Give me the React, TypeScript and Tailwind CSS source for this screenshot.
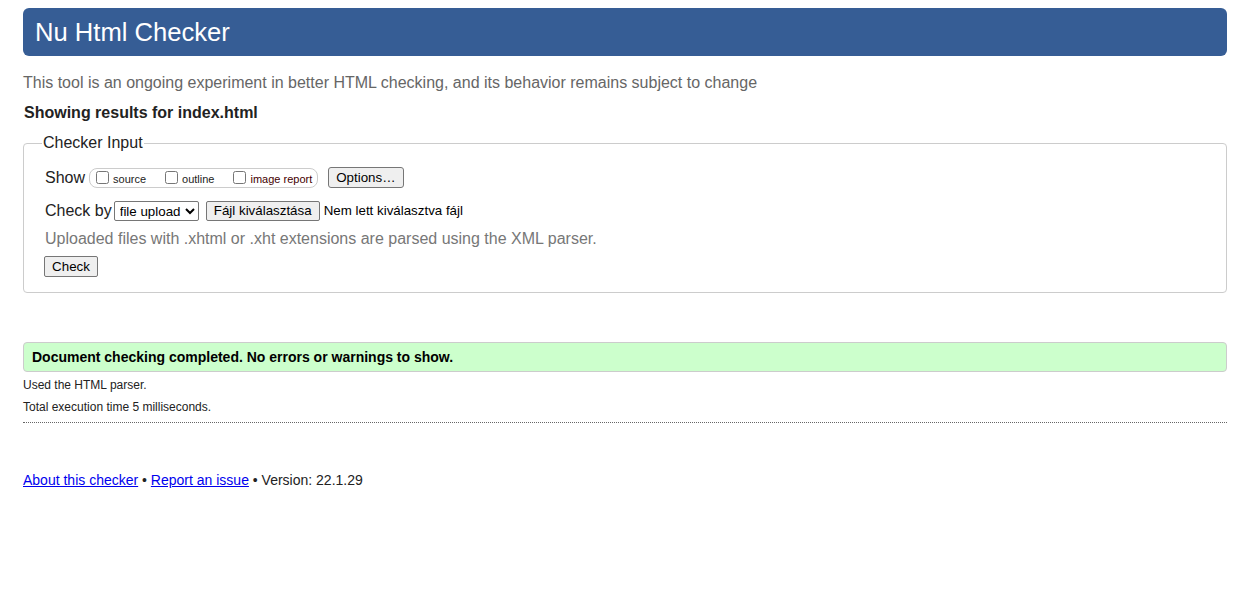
import React from 'react';

// Plain validator-style page: header bar, input fieldset, result box, footer
export default function App() {
  return (
    <div className="min-h-screen bg-white pl-[23px] pr-4 pt-2 font-['Liberation_Sans',Arial,sans-serif] text-[#222]">
      {/* Header */}
      <h1 className="h-12 rounded-md bg-[#365d95] px-3 text-[25.6px] leading-[48px] font-normal text-white">
        Nu Html Checker
      </h1>

      <p className="mt-[18px] text-base leading-[18px] text-[#666]">
        This tool is an ongoing experiment in better HTML checking, and its behavior remains subject to change
      </p>
      <p className="mt-3 ml-[1px] text-base font-bold leading-[18px] text-[#222]">
        Showing results for index.html
      </p>

      {/* Checker input */}
      <fieldset className="mt-3 rounded border border-[#ccc] px-5 pb-[14px]">
        <legend className="-ml-[2px] px-[1px] text-base leading-[18px] text-[#222]">Checker Input</legend>

        <div className="mt-[15px] flex h-[21px] items-center">
          <span className="ml-[1px] text-base leading-[18px]">Show</span>
          <div className="ml-1 flex h-5 items-center rounded-lg border border-[#ccc] pl-[6px] pr-[5px]">
            <label className="flex items-end gap-1 text-[11px] leading-[13px] text-[#222]">
              <input type="checkbox" className="h-[13px] w-[13px]" />
              <span className="translate-y-[2px]">source</span>
            </label>
            <label className="ml-[19px] flex items-end gap-1 text-[11px] leading-[13px] text-[#222]">
              <input type="checkbox" className="h-[13px] w-[13px]" />
              <span className="translate-y-[2px]">outline</span>
            </label>
            <label className="ml-[19px] flex items-end gap-1 text-[11px] leading-[13px] text-[#400]">
              <input type="checkbox" className="h-[13px] w-[13px]" />
              <span className="translate-y-[2px]">image report</span>
            </label>
          </div>
          <button className="ml-[10px] h-[21px] rounded-[3px] border border-[#767676] bg-[#efefef] px-[7px] text-[13.333px] leading-none text-black">
            Options…
          </button>
        </div>

        <div className="mt-[13px] flex h-5 items-center">
          <span className="ml-[1px] text-base leading-[18px]">Check by</span>
          <select className="ml-[2px] h-5 w-[85px] rounded-[2px] border border-[#767676] bg-white px-[1px] text-[13.333px] leading-none text-black">
            <option>file upload</option>
          </select>
          <button className="ml-[7px] h-5 w-[114px] rounded-[2px] border border-[#767676] bg-[#efefef] text-[13.333px] leading-none text-black">
            Fájl kiválasztása
          </button>
          <span className="ml-1 text-[13.333px] leading-none text-black">Nem lett kiválasztva fájl</span>
        </div>

        <p className="mt-[9px] ml-[1px] text-base leading-[18px] text-[#777]">
          Uploaded files with .xhtml or .xht extensions are parsed using the XML parser.
        </p>

        <button className="mt-2 h-[21px] w-[54px] rounded-[2px] border border-[#767676] bg-[#efefef] text-[13.333px] leading-none text-black">
          Check
        </button>
      </fieldset>

      {/* Result */}
      <div className="mt-[49px] flex h-[30px] items-center rounded border border-[#ccc] bg-[#ccffcc] px-2">
        <p className="text-sm font-bold text-black">Document checking completed. No errors or warnings to show.</p>
      </div>
      <p className="mt-[6px] text-xs leading-[14px] text-[#222]">Used the HTML parser.</p>
      <p className="mt-2 text-xs leading-[14px] text-[#222]">Total execution time 5 milliseconds.</p>
      <hr className="mt-2 border-0 border-t border-dotted border-[#666]" />

      {/* Footer */}
      <p className="mt-[49px] text-sm leading-4 text-[#222]">
        <a href="#" className="text-[#00e] underline">About this checker</a>
        {' • '}
        <a href="#" className="text-[#00e] underline">Report an issue</a>
        {' • Version: 22.1.29'}
      </p>
    </div>
  );
}
